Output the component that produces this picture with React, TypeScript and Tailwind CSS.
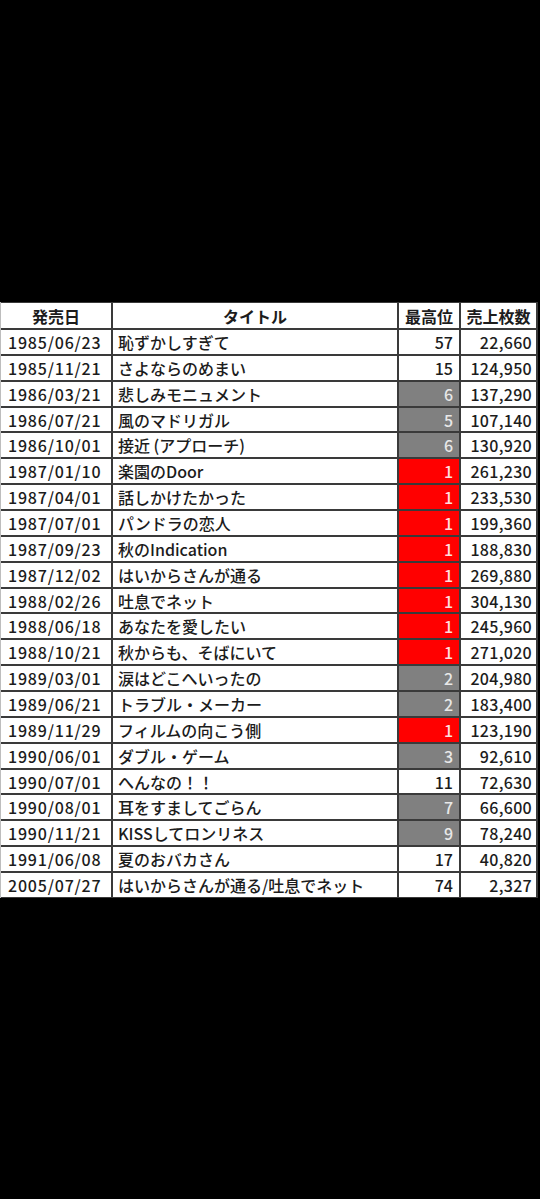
const rows: Array<[string, string, string, "" | "gray" | "red", string]> = [
  ["1985/06/23", "恥ずかしすぎて", "57", "", "22,660"],
  ["1985/11/21", "さよならのめまい", "15", "", "124,950"],
  ["1986/03/21", "悲しみモニュメント", "6", "gray", "137,290"],
  ["1986/07/21", "風のマドリガル", "5", "gray", "107,140"],
  ["1986/10/01", "接近 (アプローチ)", "6", "gray", "130,920"],
  ["1987/01/10", "楽園のDoor", "1", "red", "261,230"],
  ["1987/04/01", "話しかけたかった", "1", "red", "233,530"],
  ["1987/07/01", "パンドラの恋人", "1", "red", "199,360"],
  ["1987/09/23", "秋のIndication", "1", "red", "188,830"],
  ["1987/12/02", "はいからさんが通る", "1", "red", "269,880"],
  ["1988/02/26", "吐息でネット", "1", "red", "304,130"],
  ["1988/06/18", "あなたを愛したい", "1", "red", "245,960"],
  ["1988/10/21", "秋からも、そばにいて", "1", "red", "271,020"],
  ["1989/03/01", "涙はどこへいったの", "2", "gray", "204,980"],
  ["1989/06/21", "トラブル・メーカー", "2", "gray", "183,400"],
  ["1989/11/29", "フィルムの向こう側", "1", "red", "123,190"],
  ["1990/06/01", "ダブル・ゲーム", "3", "gray", "92,610"],
  ["1990/07/01", "へんなの！！", "11", "", "72,630"],
  ["1990/08/01", "耳をすましてごらん", "7", "gray", "66,600"],
  ["1990/11/21", "KISSしてロンリネス", "9", "gray", "78,240"],
  ["1991/06/08", "夏のおバカさん", "17", "", "40,820"],
  ["2005/07/27", "はいからさんが通る/吐息でネット", "74", "", "2,327"],
];

const font = { fontFamily: '"Noto Sans CJK JP", "Noto Sans", sans-serif' };

export default function App() {
  return (
    <div className="min-h-[1199px] w-[540px] bg-black pt-[302px]" style={font}>
      <div className="grid w-[538px] grid-cols-[110px_284px_60px_75px] gap-[2px] border-l border-[#bdbdbd] bg-[#3a3a3a] pr-[2px] pt-px pb-px text-[16px] leading-none text-[#1c1c1c]">
        <div className="flex h-[25px] items-center justify-center bg-white font-bold">発売日</div>
        <div className="flex h-[25px] items-center justify-center bg-white font-bold">タイトル</div>
        <div className="flex h-[25px] items-center justify-center bg-white font-bold">最高位</div>
        <div className="flex h-[25px] items-center justify-center bg-white font-bold">売上枚数</div>
        {rows.map(([date, title, rank, mark, sales]) => (
          <>
            <div key={date + "d"} className="flex h-[23.86px] items-center bg-white pl-[7px] font-medium tracking-[0.8px]">
              {date}
            </div>
            <div key={date + "t"} className="flex h-[23.86px] items-center bg-white pl-[5px] font-medium">
              {title}
            </div>
            <div
              key={date + "r"}
              className={`flex h-[23.86px] items-center justify-end pr-[6px] font-medium ${
                mark === "red" ? "bg-[#ff0000] text-[#ffdede]" : mark === "gray" ? "bg-[#808080] text-[#e8e8e8]" : "bg-white"
              }`}
            >
              {rank}
            </div>
            <div key={date + "s"} className="flex h-[23.86px] items-center justify-end bg-white pr-[4px] font-medium tracking-[0.3px]">
              {sales}
            </div>
          </>
        ))}
      </div>
    </div>
  );
}
